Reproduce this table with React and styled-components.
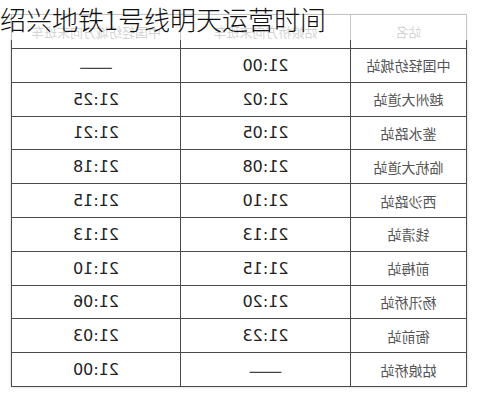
import React from 'react';
import styled, { createGlobalStyle } from 'styled-components';

const GlobalStyle = createGlobalStyle`
  html, body {
    margin: 0;
    padding: 0;
    background: #fff;
  }
`;

const Page = styled.div`
  position: relative;
  width: 479px;
  height: 400px;
  padding: 14px 0 0 11px;
  box-sizing: border-box;
  overflow: hidden;
`;

// the source picture of the table is flipped horizontally
const Table = styled.table`
  width: 455px;
  border-collapse: collapse;
  table-layout: fixed;
  transform: scaleX(-1);
  box-shadow: 0 0 3px rgba(0, 0, 0, 0.18);
`;

const Row = styled.tr`
  height: ${(p) => (p.head ? '34px' : '33.8px')};
`;

const Cell = styled.td`
  border: 1.5px solid #4a4a4a;
  padding: 0;
  text-align: center;
  vertical-align: middle;
  white-space: nowrap;
  color: ${(p) => (p.station ? '#555' : '#222')};
  font-family: ${(p) =>
    p.station
      ? '"Noto Sans CJK SC", sans-serif'
      : '"DejaVu Sans", "Noto Sans CJK SC", sans-serif'};
  font-size: ${(p) => (p.station ? '14px' : '16px')};
`;

const HeadCell = styled.th`
  border: 1.5px solid #4a4a4a;
  padding: 0;
  font-weight: normal;
  text-align: center;
  color: #777;
  font-family: "Noto Sans CJK SC", sans-serif;
  font-size: 13px;
  white-space: nowrap;
`;

const Dash = styled.span`
  font-family: "Noto Sans CJK SC", sans-serif;
  font-size: 20px;
  color: #444;
`;

const Fade = styled.div`
  position: absolute;
  left: 0;
  top: 0;
  width: 479px;
  height: 40px;
  background: rgba(255, 255, 255, 0.68);
`;

const Title = styled.h1`
  position: absolute;
  left: 0;
  top: 2px;
  margin: 0;
  font-family: "Noto Sans CJK SC", sans-serif;
  font-weight: 300;
  font-size: 26px;
  line-height: 34px;
  color: #111;
`;

const rows = [
  ['中国轻纺城站', '21:00', null],
  ['越州大道站', '21:02', '21:25'],
  ['鉴水路站', '21:05', '21:21'],
  ['临杭大道站', '21:08', '21:18'],
  ['西沙路站', '21:10', '21:15'],
  ['钱清站', '21:13', '21:13'],
  ['前梅站', '21:15', '21:10'],
  ['杨汛桥站', '21:20', '21:06'],
  ['衙前站', '21:23', '21:03'],
  ['姑娘桥站', null, '21:00'],
];

const Time = ({ value }) => (value ? value : <Dash>——</Dash>);

export default function App() {
  return (
    <Page>
      <GlobalStyle />
      <Table>
        <colgroup>
          <col style={{ width: 116 }} />
          <col style={{ width: 170 }} />
          <col style={{ width: 169 }} />
        </colgroup>
        <thead>
          <Row head>
            <HeadCell>站名</HeadCell>
            <HeadCell>姑娘桥方向末班车</HeadCell>
            <HeadCell>中国轻纺城方向末班车</HeadCell>
          </Row>
        </thead>
        <tbody>
          {rows.map(([name, a, b]) => (
            <Row key={name}>
              <Cell station>{name}</Cell>
              <Cell>
                <Time value={a} />
              </Cell>
              <Cell>
                <Time value={b} />
              </Cell>
            </Row>
          ))}
        </tbody>
      </Table>
      <Fade />
      <Title>绍兴地铁1号线明天运营时间</Title>
    </Page>
  );
}
